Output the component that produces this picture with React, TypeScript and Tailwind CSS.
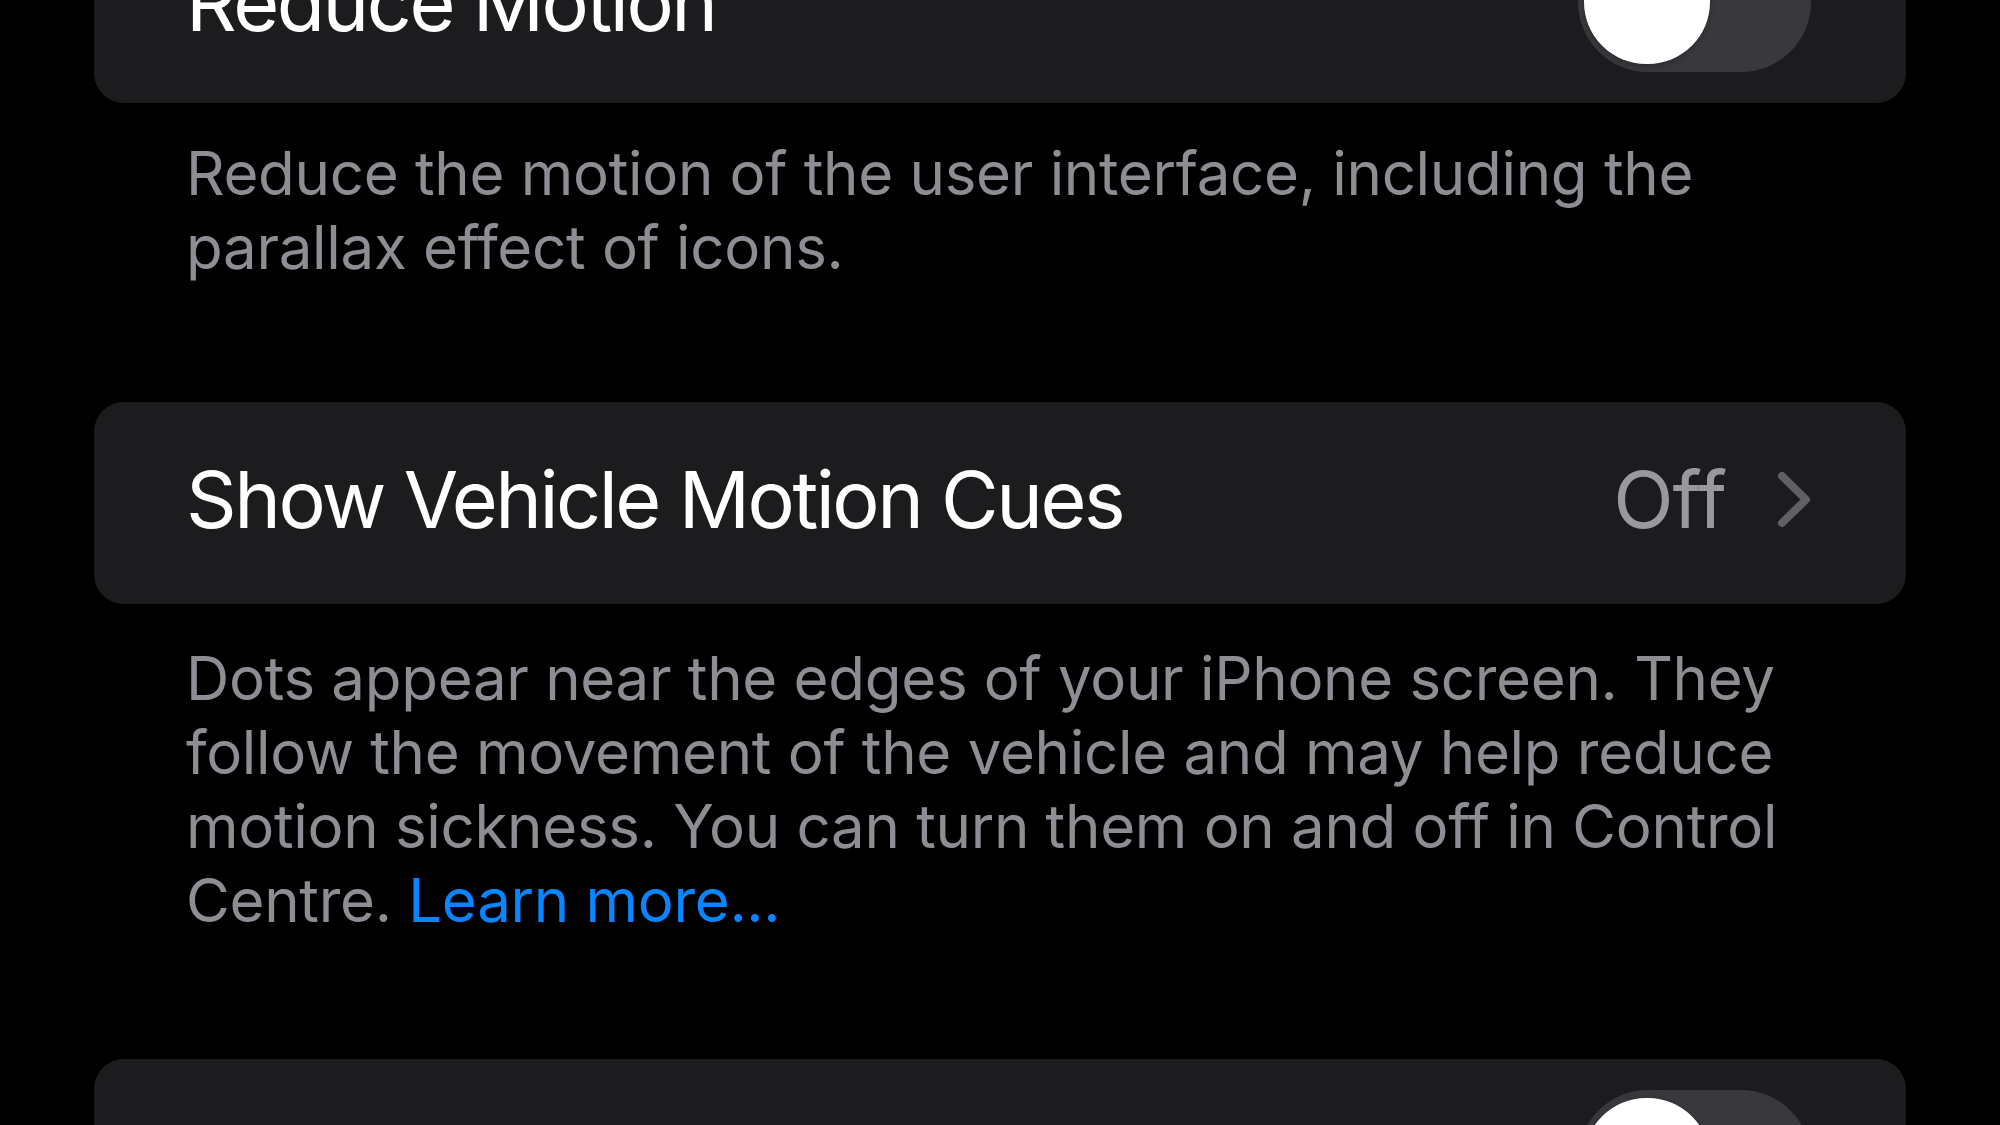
import React from 'react';

const FONT = { fontFamily: 'Inter, "Noto Sans", "Liberation Sans", sans-serif' };

function Toggle() {
  return (
    <div className="flex h-[140px] w-[233px] shrink-0 items-center rounded-full bg-[#39393d] pl-[6px]">
      <div className="h-[124px] w-[126px] rounded-full bg-white shadow-[0_2px_6px_rgba(0,0,0,0.25)]" />
    </div>
  );
}

function Chevron() {
  return (
    <svg width="34" height="57" viewBox="0 0 34 57" fill="none" className="shrink-0">
      <polyline
        points="5,5 29,28.5 5,52"
        stroke="#5f5f64"
        strokeWidth="8"
        strokeLinecap="round"
        strokeLinejoin="round"
      />
    </svg>
  );
}

function Footnote({ children, className = '' }: { children: React.ReactNode; className?: string }) {
  return (
    <p className={`pl-[92px] pr-[60px] text-[60px] leading-[74px] text-[#8d8d93] tracking-[-0.3px] ${className}`}>
      {children}
    </p>
  );
}

export default function App() {
  return (
    <div className="h-[1125px] overflow-hidden bg-black" style={FONT}>
      <div className="px-[94px]">
        {/* Reduce Motion */}
        <div className="-mt-[99px] flex h-[202px] items-center justify-between rounded-[30px] bg-[#1c1c1e] pl-[92px] pr-[95px]">
          <span className="text-[79px] leading-none text-white tracking-[-2.5px]">Reduce Motion</span>
          <Toggle />
        </div>

        <Footnote className="mt-[33px] mb-[118px]">
          Reduce the motion of the user interface, including the parallax effect of icons.
        </Footnote>

        {/* Vehicle Motion Cues */}
        <div className="flex h-[202px] items-center justify-between rounded-[30px] bg-[#1c1c1e] pb-[8px] pl-[92px] pr-[95px]">
          <span className="text-[79px] leading-none text-white tracking-[-2.5px]">Show Vehicle Motion Cues</span>
          <div className="flex items-center gap-[51px]">
            <span className="text-[79px] leading-none text-[#98989f] tracking-[-1px]">Off</span>
            <Chevron />
          </div>
        </div>

        <Footnote className="mt-[37px] mb-[122px]">
          Dots appear near the edges of your iPhone screen. They follow the movement of the vehicle and may
          help reduce motion sickness. You can turn them on and off in Control Centre.{' '}
          <span className="text-[#0a84ff]">Learn more...</span>
        </Footnote>

        {/* next row, cut off */}
        <div className="flex h-[202px] items-center justify-end rounded-[30px] bg-[#1c1c1e] pl-[92px] pr-[95px]">
          <Toggle />
        </div>
      </div>
    </div>
  );
}
